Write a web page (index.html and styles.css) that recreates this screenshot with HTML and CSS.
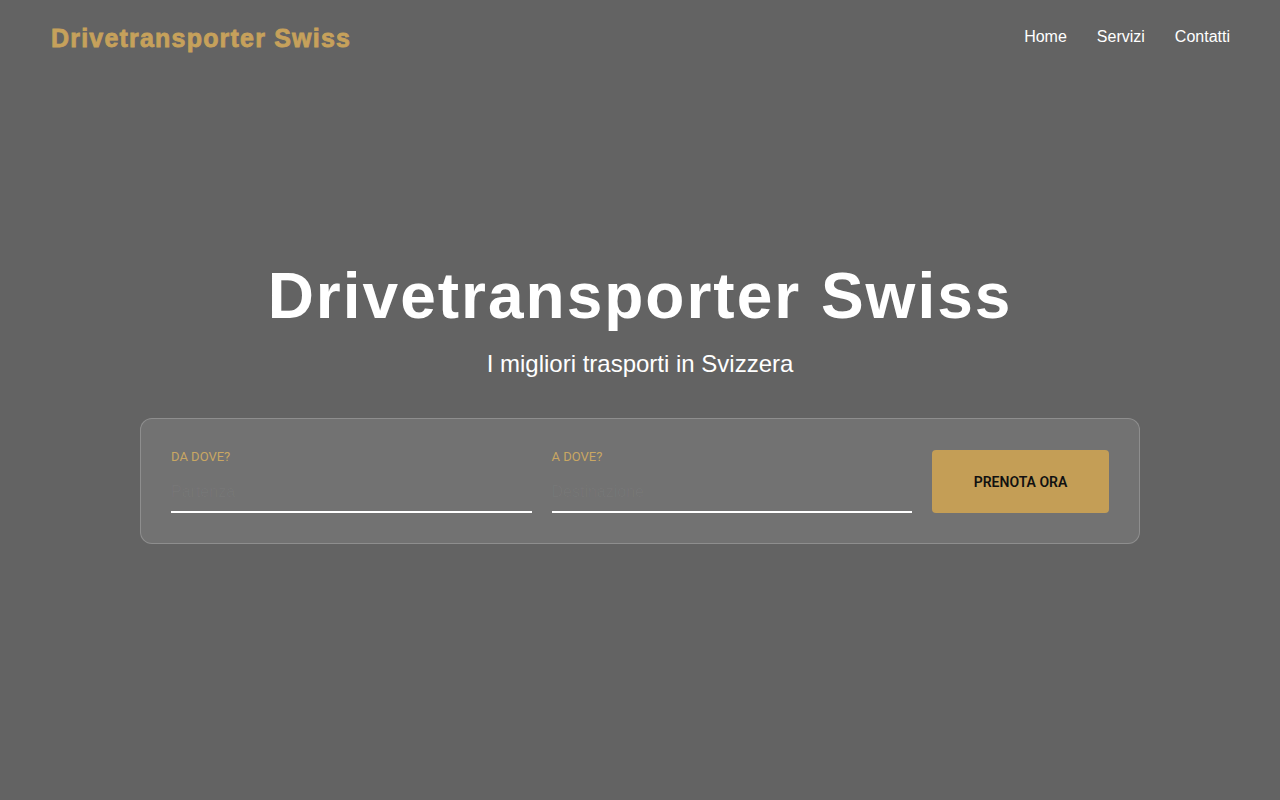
FILE: index.html
```html
<!DOCTYPE html>
<html lang="it">
  <head>
    <meta charset="UTF-8" />
    <meta name="viewport" content="width=device-width, initial-scale=1.0" />
    <title>Drivetransporter Swiss</title>
    <link rel="stylesheet" href="styles.css">
  </head>
  <body>
    <header class="site-header">
      <div class="logo">Drivetransporter Swiss</div>
      <nav class="nav">
        <a href="#">Home</a>
        <a href="#">Servizi</a>
        <a href="#">Contatti</a>
      </nav>
    </header>

    <section class="hero">
      <h1 class="hero-title">Drivetransporter Swiss</h1>
      <p class="hero-subtitle">I migliori trasporti in Svizzera</p>

      <form class="booking" onsubmit="return false;">
        <div class="field">
          <label for="from">Da dove?</label>
          <input type="text" id="from" placeholder="Partenza" />
        </div>
        <div class="field">
          <label for="to">A dove?</label>
          <input type="text" id="to" placeholder="Destinazione" />
        </div>
        <button type="submit" class="book-btn">Prenota ora</button>
      </form>
    </section>
  </body>
</html>
```

FILE: styles.css
```css
* {
  box-sizing: border-box;
}

body {
  margin: 0;
  font-family: "Liberation Sans", Arial, sans-serif;
  background-color: #636363;
  color: #fff;
}

.site-header {
  position: absolute;
  top: 0;
  left: 0;
  right: 0;
  display: flex;
  justify-content: space-between;
  align-items: center;
  padding: 24px 50px 0 51px;
}

.logo {
  color: #c6a15b;
  font-size: 25px;
  font-weight: bold;
  letter-spacing: 1.2px;
  -webkit-text-stroke: 0.8px #c6a15b;
}

.nav {
  display: flex;
  gap: 30px;
  margin-top: -3px;
}

.nav a {
  color: #fff;
  text-decoration: none;
  font-size: 16px;
}

.hero {
  height: 100vh;
  display: flex;
  flex-direction: column;
  align-items: center;
  justify-content: center;
  text-align: center;
  padding-top: 2px;
}

.hero-title {
  margin: 0;
  font-size: 64px;
  font-weight: bold;
  letter-spacing: 2px;
  line-height: 1.2;
}

.hero-subtitle {
  margin: 16px 0 40px;
  font-size: 24px;
}

.booking {
  width: 1000px;
  display: flex;
  align-items: flex-end;
  gap: 20px;
  padding: 30px;
  background: rgba(255, 255, 255, 0.1);
  border: 1px solid rgba(255, 255, 255, 0.2);
  border-radius: 12px;
  text-align: left;
}

.field {
  flex: 1;
  display: flex;
  flex-direction: column;
}

.field label {
  font-family: Roboto, sans-serif;
  font-size: 13px;
  text-transform: uppercase;
  color: #c9a763;
  margin-bottom: 9px;
}

.field input {
  background: transparent;
  border: none;
  border-bottom: 2px solid #fff;
  padding: 10px 0;
  font-size: 16px;
  color: #fff;
  outline: none;
}

.field input::placeholder {
  color: rgba(255, 255, 255, 0.03);
}

.book-btn {
  width: 177px;
  height: 63px;
  background-color: #c49e56;
  color: #111;
  border: none;
  border-radius: 4px;
  font-family: Roboto, sans-serif;
  font-size: 14px;
  font-weight: 600;
  text-transform: uppercase;
  cursor: pointer;
}
```
